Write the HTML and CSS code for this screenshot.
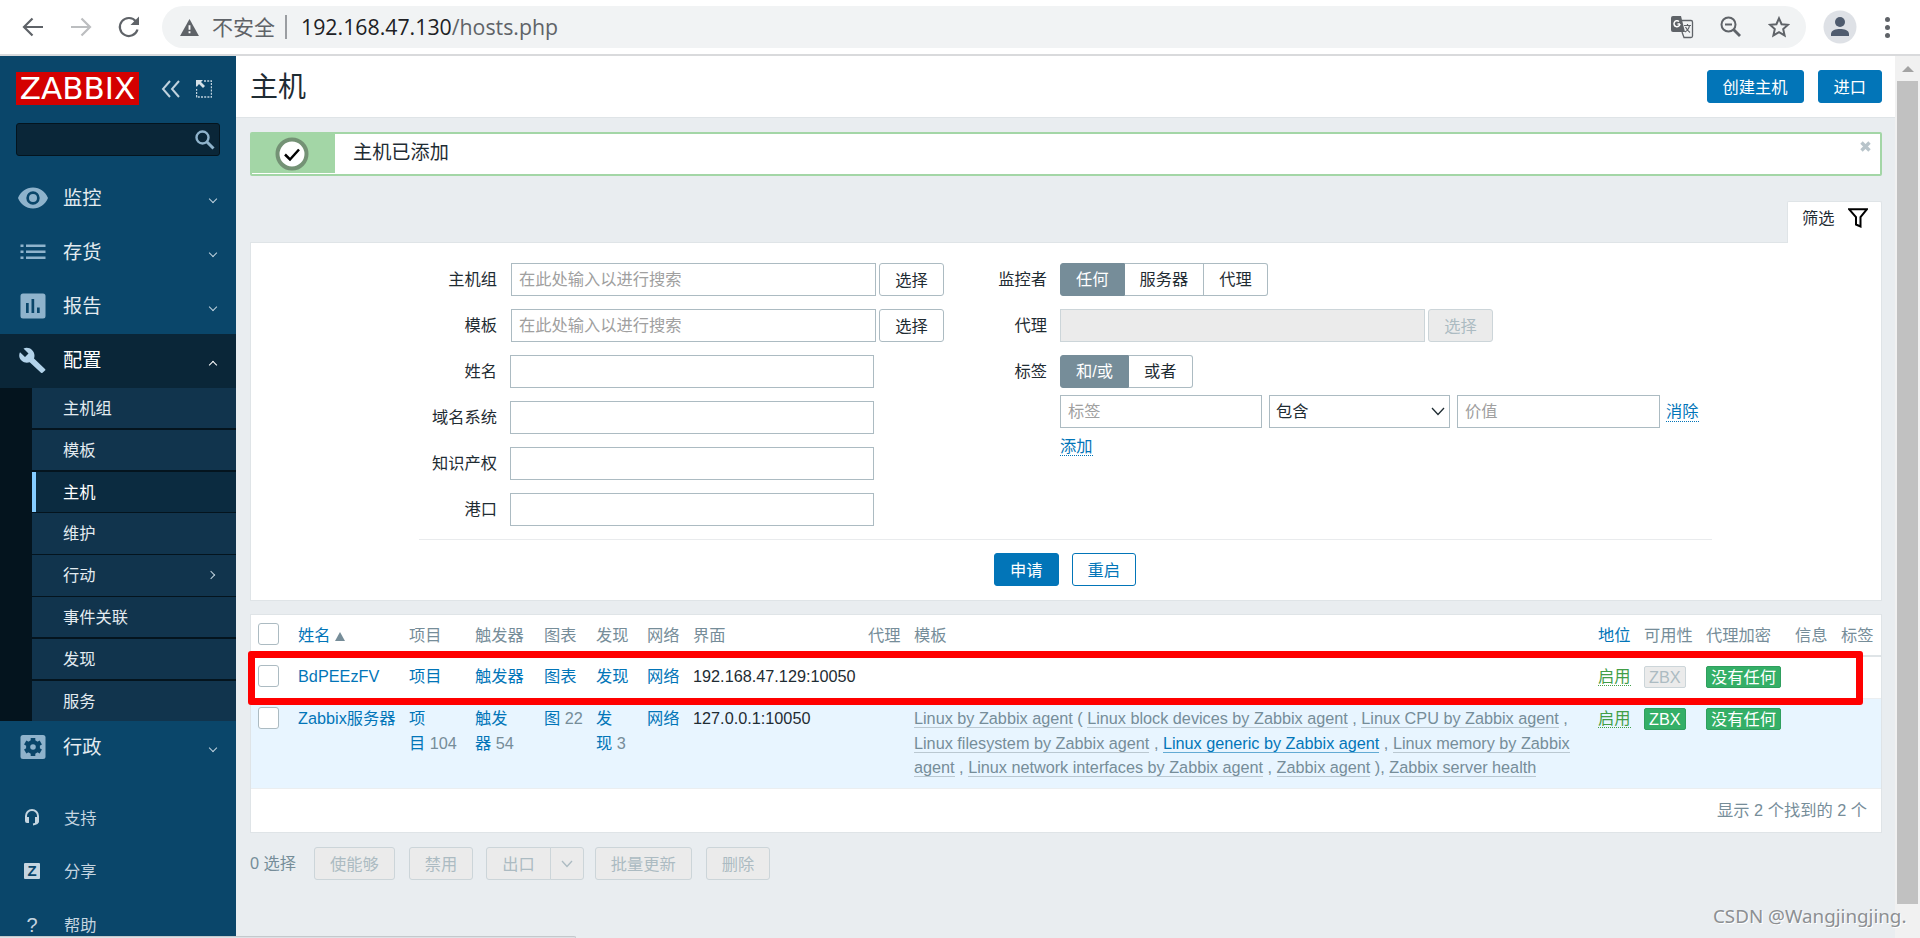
FILE: index.html
```html
<!DOCTYPE html>
<html lang="zh-CN">
<head>
  <meta charset="UTF-8" />
  <title>主机</title>
  <link rel="stylesheet" href="styles.css">
</head>
<body>
  <!-- Browser toolbar -->
  <div class="toolbar">
    <svg class="nav-icon" viewBox="0 0 24 24"><path d="M22 12H3M11.5 3.5L3 12l8.500 8.500" /></svg>
    <svg class="nav-icon disabled" viewBox="0 0 24 24"><path d="M2 12h19M12.500 3.500L21 12l-8.500 8.500" /></svg>
    <svg class="nav-icon" viewBox="0 0 24 24"><path d="M20.500 14.500A9 9 0 1 1 19 6.500" /><path class="solid" d="M22 1.500v8.500h-8.500z" /></svg>
    <div class="address">
      <svg class="warn" viewBox="0 0 20 18"><path d="M10 0L20 18H0z" /><path class="mark" d="M9 6.500h2v5H9zM9 13h2v2H9z" /></svg>
      <span class="insecure">不安全</span>
      <span class="divider"></span>
      <span class="url">192.168.47.130<span>/hosts.php</span></span>
      <span class="address-icons">
        <svg width="23" height="23" viewBox="0 0 23 23"><path d="M2 0h8l4 16H2a2 2 0 0 1-2-2V2a2 2 0 0 1 2-2z" fill="#5f6368" /><path d="M11 4.500h9a1.500 1.500 0 0 1 1.500 1.500v14a1.500 1.500 0 0 1-1.500 1.500h-7L11 16" fill="none" stroke="#5f6368" stroke-width="1.300" /><path d="M9 8H6.500M9 8a3 3 0 1 1-1-2.500" fill="none" stroke="#fff" stroke-width="1.500" /><path d="M13 9.500h7M16.500 8v1.500M18.500 9.500c-.5 3-2 5-4.500 6.500M14.500 11c1 2 2.500 4 4.500 5.500" fill="none" stroke="#5f6368" stroke-width="1.200" /></svg>
        <svg width="22" height="22" viewBox="0 0 22 22"><g fill="none" stroke="#5f6368" stroke-width="2"><circle cx="8.500" cy="8.500" r="7" /><path d="M5 8.500h7" /><path d="M13.500 13.500l6.500 6.500" stroke-width="2.800" /></g></svg>
        <svg width="22" height="22" viewBox="0 0 22 22"><path d="M11 2.300l2.600 5.900 6.400.6-4.800 4.300 1.400 6.300-5.600-3.300-5.600 3.300 1.400-6.300L2 8.800l6.400-.6z" fill="none" stroke="#5f6368" stroke-width="2" /></svg>
      </span>
    </div>
    <svg class="avatar" viewBox="0 0 34 34"><circle cx="17" cy="17" r="16.500" fill="#dee1e6" /><circle cx="17" cy="12" r="5" fill="#4f5b6e" /><path d="M8 26v-2c0-4 5-5 9-5s9 1 9 5v2z" fill="#4f5b6e" /></svg>
    <span class="kebab"><i></i><i></i><i></i></span>
  </div>

  <div class="app">
    <aside class="sidebar">
      <div class="brand">
        <span class="logo">ZABBIX</span>
        <svg class="collapse" width="20" height="18" viewBox="0 0 20 18"><path d="M9 1L2 9l7 8M18 1l-7 8 7 8" /></svg>
        <svg class="kiosk" width="16" height="18" viewBox="0 0 16 18"><path d="M8 1h7.500v16H.5V9" /><path class="arrow" d="M0 0h7L5 2l4 4-2 2-4-4-2 2.500H0z" /></svg>
      </div>
      <div class="search">
        <svg width="20" height="20" viewBox="0 0 20 20"><circle cx="7.500" cy="7.500" r="6" /><path d="M12 12l6.500 6.500" stroke-width="3" /></svg>
      </div>
      <nav class="menu">
        <a><svg class="mi" viewBox="0 0 30 26"><path fill-rule="evenodd" d="M15 2.500C8 2.500 2.500 7 0 13c2.500 6 8 10.500 15 10.500S27.500 19 30 13C27.500 7 22 2.500 15 2.500zM15 6.300a6.700 6.700 0 1 1 0 13.400a6.700 6.700 0 0 1 0-13.400z" /><circle cx="15" cy="13" r="4" /></svg>监控<i class="chev"></i></a>
        <a><svg class="mi" viewBox="0 0 30 26"><path d="M2.500 5.500h3V8h-3zM8 5.500h19.500V8H8zM2.500 11.500h3V14h-3zM8 11.500h19.500V14H8zM2.500 17.500h3V20h-3zM8 17.500h19.500V20H8z" /></svg>存货<i class="chev"></i></a>
        <a><svg class="mi" viewBox="0 0 30 26"><path fill-rule="evenodd" d="M5 .5h20a2.500 2.500 0 0 1 2.500 2.500v20a2.500 2.500 0 0 1-2.500 2.500H5A2.500 2.500 0 0 1 2.500 23V3A2.500 2.500 0 0 1 5 .5zM8 10v10h2.700V10zM13.500 6v14h2.700V6zM19 14.500V20h2.700v-5.500z" /></svg>报告<i class="chev"></i></a>
        <a class="active"><svg class="mi" viewBox="0 0 30 26"><path d="M27 22L16 11.500c1-3 .5-6-1.800-8.300C11.800.8 8.500.3 5.500 1.500l5 5-3.500 3.500-5-4.800c-1.500 3-.8 6 1.500 8.300 2.300 2.200 5.300 2.700 8.200 1.700L23 25.700c.5.400 1 .4 1.500 0L27 23.500c.6-.4.6-1 0-1.500z" /></svg>配置<i class="chev up"></i></a>
      </nav>
      <div class="submenu">
        <a>主机组</a>
        <a>模板</a>
        <a class="selected">主机</a>
        <a>维护</a>
        <a>行动<i class="chev right"></i></a>
        <a>事件关联</a>
        <a>发现</a>
        <a>服务</a>
      </div>
      <nav class="menu admin">
        <a><svg class="mi" viewBox="0 0 30 26"><rect x="2.500" y="1" width="25" height="24" rx="2.500" /><g class="gear"><circle cx="15" cy="13" r="7" /><path d="M12.700 4h4.600v18h-4.600z" /><path d="M12.700 4h4.600v18h-4.600z" transform="rotate(60 15 13)" /><path d="M12.700 4h4.600v18h-4.600z" transform="rotate(120 15 13)" /></g><circle cx="15" cy="13" r="2.800" /></svg>行政<i class="chev"></i></a>
      </nav>
      <nav class="links">
        <a><svg width="16" height="18" viewBox="0 0 16 18"><path d="M2 9V7a6 6 0 0 1 12 0v5c0 2-2 3-5 3.500" fill="none" stroke="#c5d5e0" stroke-width="2" /><path d="M1 8h4v6H3a2 2 0 0 1-2-2zM11 8h4v4a2 2 0 0 1-2 2h-2z" fill="#c5d5e0" /></svg>支持</a>
        <a><b class="share-z">Z</b>分享</a>
        <a><b class="question">?</b>帮助</a>
      </nav>
    </aside>

    <main class="content">
      <header class="page-header">
        <h1>主机</h1>
        <button class="btn primary">创建主机</button>
        <button class="btn primary">进口</button>
      </header>

      <div class="message">
        <div class="message-mark">
          <svg width="34" height="34" viewBox="0 0 34 34"><circle cx="17" cy="17" r="14.500" fill="#fff" stroke="#749275" stroke-width="4" /><path d="M10 17.500l5 5 9-10" fill="none" stroke="#000" stroke-width="2.500" /></svg>
        </div>
        <span class="message-text">主机已添加</span>
        <svg class="close" width="11" height="11" viewBox="0 0 11 11"><path d="M1.500 1.500l8 8M9.500 1.500l-8 8" /></svg>
      </div>

      <div class="filter-tab">筛选
        <svg width="20" height="20" viewBox="0 0 20 20"><path d="M1 1.200h18l-6.500 8V18.500l-4.500-2V9.200z" /></svg>
      </div>
      <section class="filter">
        <div class="filter-cols">
          <div class="form left">
            <label>主机组</label><div class="field"><span class="input multi">在此处输入以进行搜索</span><button class="btn grey">选择</button></div>
            <label>模板</label><div class="field"><span class="input multi">在此处输入以进行搜索</span><button class="btn grey">选择</button></div>
            <label>姓名</label><div class="field"><span class="input"></span></div>
            <label>域名系统</label><div class="field"><span class="input"></span></div>
            <label>知识产权</label><div class="field"><span class="input"></span></div>
            <label>港口</label><div class="field"><span class="input"></span></div>
          </div>
          <div class="form right">
            <label>监控者</label><div class="field segments"><span class="on">任何</span><span>服务器</span><span>代理</span></div>
            <label>代理</label><div class="field"><span class="input multi disabled"></span><button class="btn grey disabled">选择</button></div>
            <label>标签</label>
            <div class="tags">
              <div class="field segments"><span class="on">和/或</span><span>或者</span></div>
              <div class="tag-row">
                <span class="input tag">标签</span>
                <span class="select">包含<svg width="14" height="9" viewBox="0 0 14 9"><path d="M1 1l6 6.500L13 1" /></svg></span>
                <span class="input value">价值</span>
                <a class="dotted">消除</a>
              </div>
              <div class="add"><a class="dotted">添加</a></div>
            </div>
          </div>
        </div>
        <div class="filter-buttons">
          <button class="btn primary">申请</button>
          <button class="btn">重启</button>
        </div>
      </section>

      <section class="hosts">
        <table>
          <colgroup>
            <col class="c-check"><col class="c-name"><col class="c-items"><col class="c-triggers"><col class="c-graphs"><col class="c-disc"><col class="c-web"><col class="c-iface"><col class="c-proxy"><col class="c-tpl"><col class="c-status"><col class="c-avail"><col class="c-enc"><col class="c-info"><col class="c-tags">
          </colgroup>
          <thead>
            <tr>
              <th><span class="check"></span></th>
              <th><a>姓名</a><i class="sort"></i></th>
              <th>项目</th><th>触发器</th><th>图表</th><th>发现</th><th>网络</th><th>界面</th><th>代理</th><th>模板</th>
              <th><a>地位</a></th><th>可用性</th><th>代理加密</th><th>信息</th><th>标签</th>
            </tr>
          </thead>
          <tbody>
            <tr>
              <td><span class="check"></span></td>
              <td><a>BdPEEzFV</a></td>
              <td><a>项目</a></td><td><a>触发器</a></td><td><a>图表</a></td><td><a>发现</a></td><td><a>网络</a></td>
              <td>192.168.47.129:10050</td><td></td><td></td>
              <td><a class="enabled">启用</a></td>
              <td><span class="badge off">ZBX</span></td>
              <td><span class="badge">没有任何</span></td>
              <td></td><td></td>
            </tr>
            <tr class="hover">
              <td><span class="check"></span></td>
              <td><a>Zabbix服务器</a></td>
              <td><a>项<br>目</a> <sup>104</sup></td><td><a>触发<br>器</a> <sup>54</sup></td><td><a>图</a> <sup>22</sup></td><td><a>发<br>现</a> <sup>3</sup></td><td><a>网络</a></td>
              <td>127.0.0.1:10050</td><td></td>
              <td class="templates"><a>Linux by Zabbix agent</a> ( <a>Linux block devices by Zabbix agent</a> , <a>Linux CPU by Zabbix agent</a> ,<br><a>Linux filesystem by Zabbix agent</a> , <a class="link">Linux generic by Zabbix agent</a> , <a>Linux memory by Zabbix<br>agent</a> , <a>Linux network interfaces by Zabbix agent</a> , <a>Zabbix agent</a> ), <a>Zabbix server health</a></td>
              <td><a class="enabled">启用</a></td>
              <td><span class="badge">ZBX</span></td>
              <td><span class="badge">没有任何</span></td>
              <td></td><td></td>
            </tr>
          </tbody>
        </table>
        <div class="table-stats">显示 2 个找到的 2 个</div>
        <div class="highlight"></div>
      </section>

      <div class="actions">
        <span class="count">0 选择</span>
        <button class="btn disabled">使能够</button>
        <button class="btn disabled">禁用</button>
        <div class="split">
          <button class="btn disabled">出口</button>
          <button class="btn disabled drop"><svg width="12" height="8" viewBox="0 0 12 8"><path d="M1 1l5 5.500L11 1" /></svg></button>
        </div>
        <button class="btn disabled">批量更新</button>
        <button class="btn disabled">删除</button>
      </div>
    </main>

    <div class="scrollbar"><i class="up-arrow"></i><div class="thumb"></div></div>
  </div>
  <div class="status-bubble"></div>
  <div class="watermark">CSDN @Wangjingjing.</div>
</body>
</html>
```
FILE: styles.css
```css
:root {
  --blue: #0275b8;
  --text: #1f2c33;
  --grey: #768d99;
  --border: #acbbc2;
  --line: #dfe4e7;
  --bg: #e9edf0;
  --nav: #0a466a;
}
* {
  box-sizing: border-box;
}
body {
  margin: 0;
  height: 938px;
  overflow: hidden;
  position: relative;
  background: var(--bg);
  color: var(--text);
  font-family: "Liberation Sans", "Noto Sans CJK SC", sans-serif;
  font-size: 16.25px;
  line-height: 24.5px;
}
svg {
  display: block;
  flex: none;
}
a {
  color: var(--blue);
}
/* Browser toolbar */
.toolbar {
  height: 56px;
  border-bottom: 2px solid #d9dadc;
  background: #fff;
  display: flex;
  align-items: center;
  padding-left: 21px;
}
.nav-icon {
  width: 24px;
  height: 24px;
  margin-right: 24px;
  fill: none;
  stroke: #5f6368;
  stroke-width: 2.2;
}
.nav-icon.disabled {
  stroke: #bcbec0;
}
.nav-icon .solid {
  fill: #5f6368;
  stroke: none;
}
.address {
  width: 1644px;
  height: 42px;
  margin-left: -3px;
  border-radius: 21px;
  background: #f1f3f4;
  display: flex;
  align-items: center;
  padding: 0 16px 0 18px;
  font-family: "Open Sans", "Noto Sans CJK SC", sans-serif;
  font-size: 21px;
}
.warn {
  width: 19px;
  height: 17px;
  margin-right: 13px;
  fill: #5f6368;
}
.warn .mark {
  fill: #fff;
}
.insecure {
  color: #5f6368;
}
.divider {
  width: 2px;
  height: 24px;
  margin: 0 14px 0 10px;
  background: #9a9da1;
}
.url {
  color: #202124;
  font-size: 21.3px;
}
.url span {
  color: #5f6368;
}
.address-icons {
  display: flex;
  gap: 26px;
  margin-left: auto;
}
.avatar {
  width: 34px;
  height: 34px;
  margin-left: 17px;
}
.kebab {
  display: flex;
  flex-direction: column;
  gap: 3px;
  margin-left: 28px;
}
.kebab i {
  width: 5px;
  height: 5px;
  border-radius: 50%;
  background: #5f6368;
}
.app {
  display: flex;
  height: 882px;
}
/* Sidebar */
.sidebar {
  width: 236px;
  height: 881px;
  overflow: hidden;
  flex: none;
  background: var(--nav);
}
.brand {
  display: flex;
  align-items: center;
  height: 33px;
  margin: 16px 0 18px 16px;
}
.logo {
  width: 123px;
  height: 33px;
  background: #d40000;
  color: #fff;
  font-family: "DejaVu Sans", sans-serif;
  font-size: 31px;
  line-height: 33px;
  text-align: center;
}
.collapse {
  margin-left: 22px;
  fill: none;
  stroke: #c0d2de;
  stroke-width: 2;
}
.kiosk {
  margin-left: 15px;
  fill: none;
  stroke: #c0d2de;
  stroke-width: 1.4;
  stroke-dasharray: 2 1.2;
}
.kiosk .arrow {
  fill: #d5e1e8;
  stroke: none;
}
.search {
  width: 204px;
  height: 33px;
  margin: 0 16px 15px;
  border: 1px solid #04141e;
  border-radius: 3px;
  background: #0a2638;
  display: flex;
  align-items: center;
  justify-content: flex-end;
  padding-right: 4px;
}
.search svg {
  fill: none;
  stroke: #8fb3cc;
  stroke-width: 2.4;
}
.menu a {
  height: 54px;
  display: flex;
  align-items: center;
  padding: 0 19px 0 18px;
  color: #e3ebf0;
  font-size: 19.2px;
}
.menu a.active {
  background: #0a2638;
  color: #fff;
}
.mi {
  width: 30px;
  height: 26px;
  margin: -2px 15px 0 0;
  fill: #8fb3cc;
}
.active .mi {
  fill: #b3d3ea;
}
.gear {
  fill: var(--nav);
}
.menu:first-of-type {
  padding-top: 1px;
}
.chev {
  width: 6px;
  height: 6px;
  margin: 0 1px 0 auto;
  border: solid #c0d2de;
  border-width: 0 1.5px 1.5px 0;
  transform: rotate(45deg);
}
.chev.up {
  transform: translateY(4px) rotate(225deg);
  border-color: #fff;
}
.chev.right {
  transform: rotate(-45deg);
  margin-right: 3px;
}
.submenu {
  height: 333px;
  padding-left: 32px;
  background: #04141e;
  display: grid;
  grid-template-rows: repeat(8, 1fr);
  gap: 1.5px;
}
.submenu a {
  background: #11344d;
  color: #e3ebf0;
  display: flex;
  align-items: center;
  padding: 0 19px 0 31px;
}
.submenu a.selected {
  background: #0b2b40;
  border-left: 4px solid #85ccff;
  padding-left: 27px;
  color: #fff;
}
.links {
  padding-top: 16px;
}
.links a {
  display: flex;
  align-items: center;
  height: 53.5px;
  padding-left: 24px;
  color: #c5d5e0;
}
.links svg,
.links b {
  width: 16px;
  margin-right: 24px;
  text-align: center;
}
.share-z {
  height: 16px;
  line-height: 16px;
  border-radius: 1px;
  background: #c5d5e0;
  color: var(--nav);
  font-size: 15px;
}
.question {
  font-size: 20px;
  font-weight: normal;
}
/* Page content */
.content {
  width: 1659px;
  flex: none;
  padding-bottom: 30px;
}
.page-header {
  height: 62px;
  border-bottom: 1px solid var(--line);
  background: #fff;
  display: flex;
  align-items: center;
  padding: 0 13px 0 14px;
  gap: 14px;
}
.page-header h1 {
  margin: 0 auto 0 0;
  padding-top: 4px;
  font-size: 28px;
  font-weight: normal;
}
.btn {
  height: 33px;
  border: 1px solid var(--blue);
  border-radius: 3px;
  background: #fff;
  color: var(--blue);
  font: inherit;
  line-height: 30px;
  padding: 0 15px;
  white-space: nowrap;
}
.btn.primary {
  background: var(--blue);
  color: #fff;
}
.btn.grey {
  border-color: var(--border);
  color: var(--text);
  width: 65px;
}
.btn.disabled {
  border-color: #ccd5d9;
  background: #ebebeb;
  color: var(--border);
}
.message {
  height: 44px;
  margin: 14px 13px 25px 14px;
  border: 2px solid #a3d6a6;
  border-radius: 2px;
  background: #fff;
  display: flex;
  font-size: 19.2px;
}
.message-mark {
  width: 83px;
  height: 39px;
  background: #a3d6a6;
  display: flex;
  align-items: center;
  justify-content: center;
  padding-right: 3px;
}
.message-text {
  padding: 7px 0 0 18px;
}
.close {
  margin: 7px 9px 0 auto;
  stroke: #b8c4ca;
  stroke-width: 3.4;
}
/* Filter */
.filter-tab {
  width: 95px;
  height: 42px;
  margin: 0 13px -1px auto;
  border: 1px solid var(--line);
  border-bottom: none;
  border-radius: 2px 2px 0 0;
  background: #fff;
  position: relative;
  display: flex;
  gap: 13px;
  padding: 4px 0 0 14px;
}
.filter-tab svg {
  margin-top: 2px;
  fill: none;
  stroke: #000;
  stroke-width: 2;
}
.filter {
  height: 359px;
  margin: 0 13px 13px 14px;
  border: 1px solid var(--line);
  background: #fff;
}
.filter-cols {
  width: 1293px;
  height: 297px;
  margin-left: 168px;
  border-bottom: 1px solid #e9ebed;
  display: flex;
  padding-top: 20px;
}
.form {
  display: grid;
  grid-auto-rows: 33px;
  row-gap: 13px;
  align-content: start;
}
.form.left {
  width: 549px;
  grid-template-columns: 78px 1fr;
  column-gap: 13px;
}
.form.right {
  grid-template-columns: 79px 1fr;
  column-gap: 13px;
}
.form label {
  text-align: right;
  line-height: 33px;
}
.field {
  display: flex;
}
.input {
  width: 364px;
  height: 33px;
  border: 1px solid var(--border);
  background: #fff;
  padding-left: 7px;
  color: #a0a0a0;
  line-height: 31px;
}
.input.multi {
  width: 365px;
  margin-right: 3px;
}
.left .input.multi {
  margin-left: 1px;
}
.input.disabled {
  border-color: #ccd5d9;
  background: #ebebeb;
}
.segments span {
  height: 33px;
  border: 1px solid var(--border);
  border-left: none;
  padding: 0 15px;
  line-height: 31px;
}
.segments span:last-child {
  border-radius: 0 3px 3px 0;
}
.segments .on {
  border-color: var(--grey);
  border-left: 1px solid var(--grey);
  border-radius: 3px 0 0 3px;
  background: var(--grey);
  color: #fff;
}
.tag-row {
  display: flex;
  margin-top: 7px;
  align-items: center;
}
.input.tag {
  width: 202px;
}
.input.value {
  width: 203px;
  margin-right: 6px;
}
.select {
  width: 181px;
  height: 33px;
  margin: 0 7px;
  border: 1px solid var(--border);
  display: flex;
  align-items: center;
  justify-content: space-between;
  padding: 0 4px 0 6px;
}
.select svg,
.drop svg {
  fill: none;
  stroke: #1f2c33;
  stroke-width: 1.3;
}
.dotted {
  line-height: 20px;
  border-bottom: 1px dotted var(--blue);
}
.add {
  margin-top: 6px;
}
.filter-buttons {
  display: flex;
  justify-content: center;
  gap: 13px;
  padding: 13px 2px 0 0;
}
/* Hosts table */
.hosts {
  height: 219px;
  margin: 0 13px 14px 14px;
  border: 1px solid var(--line);
  background: #fff;
  position: relative;
}
table {
  width: 1630px;
  table-layout: fixed;
  border-collapse: separate;
  border-spacing: 0;
}
.c-check { width: 39px; }
.c-name { width: 111px; }
.c-items { width: 66px; }
.c-triggers { width: 69px; }
.c-graphs { width: 52px; }
.c-disc { width: 51px; }
.c-web { width: 46px; }
.c-iface { width: 175px; }
.c-proxy { width: 46px; }
.c-tpl { width: 684px; }
.c-status { width: 46px; }
.c-avail { width: 62px; }
.c-enc { width: 89px; }
.c-info { width: 46px; }
.c-tags { width: 48px; }
th {
  height: 42px;
  padding: 8px 0 7px 8px;
  border-bottom: 2px solid var(--line);
  color: var(--grey);
  font-weight: normal;
  text-align: left;
  vertical-align: top;
}
td {
  height: 42px;
  padding: 7px 0 7px 8px;
  border-bottom: 1px solid #ebeef0;
  vertical-align: top;
  white-space: nowrap;
}
tr.hover td {
  height: 90px;
  background: #e8f5ff;
}
.check {
  display: block;
  width: 21px;
  height: 22px;
  border: 1px solid var(--border);
  border-radius: 3px;
  background: #fff;
  margin-left: -1px;
}
td .check {
  margin-top: 1px;
}
.sort {
  display: inline-block;
  margin-left: 4px;
  border: 5px solid transparent;
  border-top: none;
  border-bottom: 9px solid var(--grey);
}
sup {
  font-size: inherit;
  vertical-align: baseline;
  line-height: 1;
  color: var(--grey);
}
.templates,
.templates a {
  color: var(--grey);
}
.templates {
  letter-spacing: -0.012px;
}
.templates a {
  border-bottom: 1px solid #bac8d1;
}
.templates a.link {
  color: var(--blue);
  border-color: #63abd4;
}
.enabled {
  color: #429e47;
  border-bottom: 1px dotted #429e47;
}
.badge {
  display: block;
  width: fit-content;
  height: 22px;
  border: 1px solid #2f9f5e;
  border-radius: 2px;
  background: #34af67;
  color: #fff;
  line-height: 21px;
  padding: 0 4px;
  margin-top: 2px;
}
.badge.off {
  border-color: #ccd5d9;
  background: #ebebeb;
  color: var(--border);
}
.table-stats {
  padding: 9px 14px 0 0;
  color: var(--grey);
  text-align: right;
}
/* Marker drawn over the first host row */
.highlight {
  position: absolute;
  left: -3px;
  top: 36px;
  width: 1615px;
  height: 54px;
  border: 7px solid #f00;
  border-radius: 3px;
}
.actions {
  display: flex;
  align-items: center;
  margin-left: 14px;
  color: var(--grey);
  gap: 14px;
}
.count {
  margin-right: 4px;
}
.split {
  display: flex;
  margin: 0 -3px 0 -1px;
}
.split .btn:first-child {
  border-radius: 3px 0 0 3px;
}
.split .drop {
  width: 34px;
  margin-left: -1px;
  padding: 0 10px;
  border-radius: 0 3px 3px 0;
}
.drop svg {
  stroke: var(--border);
}
/* Scrollbar */
.scrollbar {
  width: 25px;
  flex: none;
  background: #f1f1f1;
  padding: 10px 2px 0;
}
.up-arrow {
  display: block;
  width: 0;
  margin: 0 auto 9px 5px;
  border: 6px solid transparent;
  border-top: none;
  border-bottom-color: #a3a3a3;
}
.thumb {
  width: 21px;
  height: 823px;
  background: #c1c1c1;
}
.status-bubble {
  position: absolute;
  left: 0;
  bottom: 0;
  width: 576px;
  height: 2px;
  border-top: 1px solid #c4c9cc;
  border-right: 1px solid #c4c9cc;
  border-radius: 0 3px 0 0;
  background: #dee1e6;
}
.watermark {
  position: absolute;
  left: 1713px;
  top: 904px;
  color: #8c8f92;
  font-family: "Noto Sans", sans-serif;
  font-size: 18.8px;
  text-shadow: 1px 1px 0 #fff;
}
```
